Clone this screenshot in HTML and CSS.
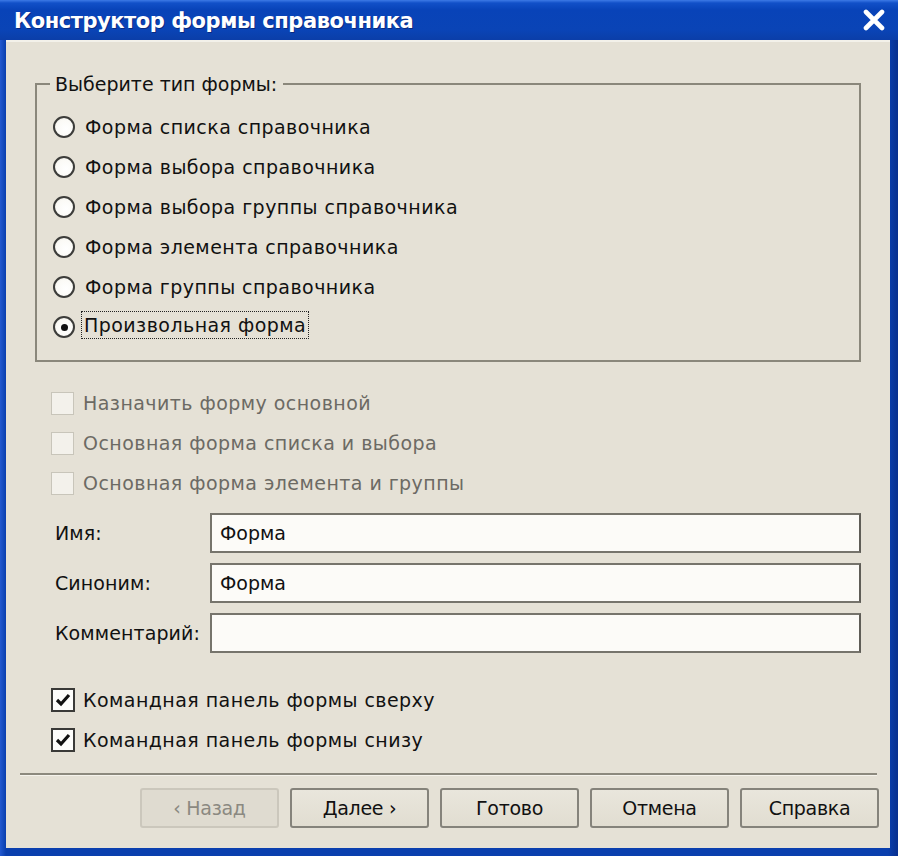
FILE: index.html
```html
<!DOCTYPE html>
<html lang="ru">
<head>
<meta charset="utf-8">
<title>Конструктор формы справочника</title>
<link rel="stylesheet" href="styles.css">
</head>
<body>
<div class="window">
  <div class="titlebar">
    <span class="title">Конструктор формы справочника</span>
    <svg class="close" width="24" height="22" viewBox="0 0 24 22" aria-hidden="true">
      <path d="M4 3 L20 19 M20 3 L4 19" stroke="#fff" stroke-width="4.6" stroke-linecap="round" fill="none"/>
    </svg>
  </div>
  <div class="client">
    <fieldset class="group">
      <legend class="legend">Выберите тип формы:</legend>
      <div class="row"><span class="radio"></span><span class="label">Форма списка справочника</span></div>
      <div class="row"><span class="radio"></span><span class="label">Форма выбора справочника</span></div>
      <div class="row"><span class="radio"></span><span class="label">Форма выбора группы справочника</span></div>
      <div class="row"><span class="radio"></span><span class="label">Форма элемента справочника</span></div>
      <div class="row"><span class="radio"></span><span class="label">Форма группы справочника</span></div>
      <div class="row"><span class="radio checked"></span><span class="label focus">Произвольная форма</span></div>
    </fieldset>

    <div class="checks disabled">
      <div class="row"><span class="box"></span><span class="label">Назначить форму основной</span></div>
      <div class="row"><span class="box"></span><span class="label">Основная форма списка и выбора</span></div>
      <div class="row"><span class="box"></span><span class="label">Основная форма элемента и группы</span></div>
    </div>

    <div class="fields">
      <div class="field"><span class="flabel">Имя:</span><div class="input">Форма</div></div>
      <div class="field"><span class="flabel">Синоним:</span><div class="input">Форма</div></div>
      <div class="field"><span class="flabel">Комментарий:</span><div class="input"></div></div>
    </div>

    <div class="checks bottom">
      <div class="row"><span class="box on"><svg width="16" height="14" viewBox="0 0 16 14" aria-hidden="true"><path d="M2 7 L6 11 L14 2" stroke="#111" stroke-width="3.2" fill="none"/></svg></span><span class="label">Командная панель формы сверху</span></div>
      <div class="row"><span class="box on"><svg width="16" height="14" viewBox="0 0 16 14" aria-hidden="true"><path d="M2 7 L6 11 L14 2" stroke="#111" stroke-width="3.2" fill="none"/></svg></span><span class="label">Командная панель формы снизу</span></div>
    </div>

    <div class="separator"></div>

    <div class="buttons">
      <div class="btn off">‹ Назад</div>
      <div class="btn">Далее ›</div>
      <div class="btn">Готово</div>
      <div class="btn">Отмена</div>
      <div class="btn">Справка</div>
    </div>
  </div>
</div>
</body>
</html>
```

FILE: styles.css
```css
* { box-sizing: border-box; }

html, body {
  margin: 0;
  padding: 0;
  width: 898px;
  height: 856px;
  overflow: hidden;
}

body {
  background: #0a3eab;
  font-family: "DejaVu Sans", Tahoma, sans-serif;
  font-size: 19px;
  color: #111;
}

.window {
  width: 898px;
  height: 856px;
  display: flex;
  flex-direction: column;
  background: linear-gradient(to right, #2259d0 0px, #0a3fae 6px, #0a3fae 888px, #072f8e 898px);
}

.titlebar {
  height: 40px;
  flex: none;
  display: flex;
  align-items: center;
  justify-content: space-between;
  padding: 2px 12px 0 14px;
  background: linear-gradient(to bottom, #3d7ae6 0px, #1150c8 3px, #0843b8 10px, #0a44b6 30px, #0b3ea8 40px);
  color: #fff;
}

.title {
  font-family: "DejaVu Sans", Tahoma, sans-serif;
  font-weight: bold;
  font-size: 21px;
  letter-spacing: -0.45px;
  text-shadow: 1px 1px 0 #0a2a80;
}

.close { display: block; margin-top: -2px; }

.client {
  flex: 1;
  margin: 0 8px 8px 6px;
  background: #e5e1d6;
  border-top: 2px solid #f3f1ea;
  padding: 30px 11px 0 29px;
  display: flex;
  flex-direction: column;
}

.group {
  margin: 0 18px 0 0;
  padding: 11px 13px 13px 13px;
  border: 2px solid #8a877b;
  min-width: 0;
}

.legend {
  padding: 0 6px 0 5px;
  line-height: 24px;
}

.row {
  height: 40px;
  display: flex;
  align-items: center;
}

.radio {
  width: 22px;
  height: 22px;
  margin-left: 3px;
  margin-right: 10px;
  border-radius: 50%;
  border: 2px solid #3c3c3a;
  background: radial-gradient(circle at 60% 60%, #ffffff 0, #fbfaf6 60%, #e6e4dc 100%);
  flex: none;
  display: flex;
  align-items: center;
  justify-content: center;
}

.radio.checked::after {
  content: "";
  width: 7px;
  height: 7px;
  border-radius: 50%;
  background: #111;
}

.label {
  white-space: nowrap;
  letter-spacing: 0.45px;
}

.focus {
  outline: 1px dotted #222;
  outline-offset: 0;
  padding: 0 2px 0 2px;
  margin-left: -3px;
  line-height: 26px;
  margin-top: -5px;
}

.checks {
  display: flex;
  flex-direction: column;
  margin-left: 16px;
}

.checks.disabled { margin-top: 21px; color: #6c6a64; }

.box {
  width: 23px;
  height: 23px;
  margin-right: 9px;
  flex: none;
  border: 1px solid #c8c5ba;
  background: #f3f1eb;
  display: flex;
  align-items: center;
  justify-content: center;
}

.box.on {
  width: 24px;
  height: 24px;
  margin-right: 8px;
  border: 2px solid #3a3a38;
  background: #fdfdfb;
}

.fields {
  margin-top: 10px;
  display: flex;
  flex-direction: column;
  gap: 10px;
  margin-right: 18px;
}

.field {
  display: flex;
  align-items: center;
  height: 40px;
}

.flabel {
  width: 175px;
  padding-left: 20px;
  flex: none;
  letter-spacing: 0.1px;
}

.input {
  flex: 1;
  height: 40px;
  border: 2px solid #76746c;
  border-right-color: #5f5d57;
  background: #fcfbf8;
  padding: 0 8px;
  display: flex;
  align-items: center;
}

.checks.bottom { margin-top: 27px; }

.separator {
  margin: 13px 2px 0 -15px;
  background: #8c897e;
  border-bottom: 1px solid #f5f3ec;
  height: 3px;
}

.buttons {
  margin-top: 12px;
  display: flex;
  justify-content: flex-end;
  gap: 11px;
}

.btn {
  width: 139px;
  height: 40px;
  border: 2px solid #85837b;
  border-radius: 3px;
  background: linear-gradient(to bottom, #e9e6dc, #e1ddd1);
  display: flex;
  align-items: center;
  justify-content: center;
  letter-spacing: -0.3px;
}

.btn.off {
  border-color: #cbc7bc;
  background: #dfdbd0;
  color: #8b8981;
}
```
